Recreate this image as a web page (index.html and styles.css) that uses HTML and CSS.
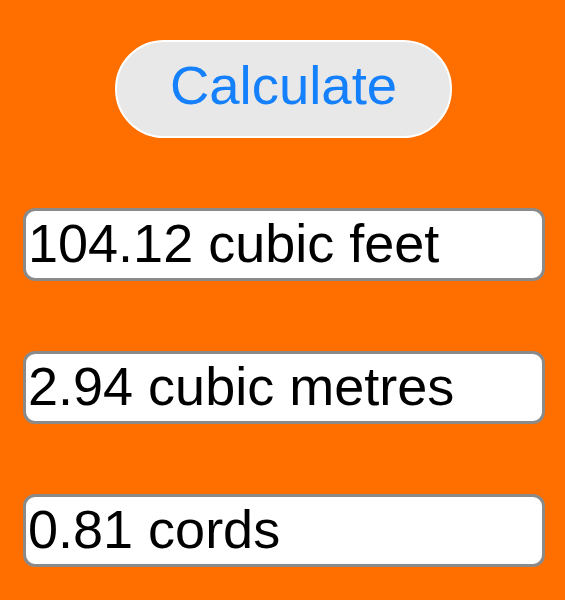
FILE: index.html
```html
<!DOCTYPE html>
<html lang="en">
<head>
  <meta charset="UTF-8" />
  <title>Firewood Calculator</title>
  <link rel="stylesheet" href="styles.css">
</head>
<body>
<div class="page">
  <button class="calcBtn">Calculate</button>
  <div class="result">104.12 cubic feet</div>
  <div class="result">2.94 cubic metres</div>
  <div class="result">0.81 cords</div>
</div>
</body>
</html>
```

FILE: styles.css
```css
* { margin: 0; padding: 0; box-sizing: border-box; }
html, body {
  height: 100%;
  background-color: #ff6f00;
  font-family: "Liberation Sans", Arial, sans-serif;
}
.page {
  display: flex;
  flex-direction: column;
  gap: 70px;
  padding: 40px 20px 0 23px;
}
.calcBtn {
  align-self: flex-start;
  margin-left: 92px;
  width: 337px;
  height: 98px;
  border: 2.5px solid #fff;
  border-radius: 49px;
  background-color: #e8e8e8;
  color: #1580fb;
  font-family: inherit;
  font-size: 54.5px;
  line-height: 86px;
  padding-bottom: 7px;
}
.result {
  height: 73px;
  border: 3px solid #8a8a8a;
  border-radius: 12px;
  background-color: #fff;
  color: #000;
  font-size: 54px;
  line-height: 65px;
  padding-left: 2px;
  white-space: nowrap;
}
```
